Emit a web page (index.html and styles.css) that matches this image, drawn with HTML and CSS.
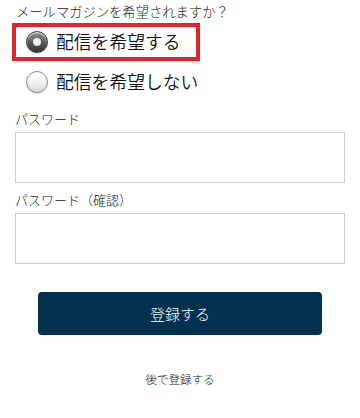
FILE: index.html
```html
<!DOCTYPE html>
<html lang="ja">
<head>
    <meta charset="UTF-8">
    <meta name="viewport" content="width=device-width, initial-scale=1.0">
    <title>メールマガジン登録</title>
    <link rel="stylesheet" href="styles.css">
</head>
<body>
    <form class="register-form">
        <p class="question">メールマガジンを希望されますか？</p>

        <div class="options">
            <label class="option option-marked">
                <input type="radio" name="magazine" value="1" checked>
                <span class="radio"></span>
                <span class="option-text">配信を希望する</span>
            </label>
            <label class="option">
                <input type="radio" name="magazine" value="0">
                <span class="radio"></span>
                <span class="option-text">配信を希望しない</span>
            </label>
        </div>

        <label class="field-label" for="password">パスワード</label>
        <input class="field-input" type="password" id="password">

        <label class="field-label" for="password-confirm">パスワード（確認）</label>
        <input class="field-input" type="password" id="password-confirm">

        <button type="button" class="submit-btn">登録する</button>

        <a class="later-link" href="#">後で登録する</a>
    </form>
</body>
</html>
```

FILE: styles.css
```css
body {
    margin: 0;
    background: #fff;
    color: #333;
    font-family: "Noto Sans CJK JP", "Noto Sans", sans-serif;
}

.register-form {
    display: flex;
    flex-direction: column;
    padding: 2px 15px 0;
}

.question {
    margin: 0 0 5px 1px;
    font-size: 13.3px;
    font-weight: 300;
    line-height: 20px;
    color: #222;
}

.options {
    display: flex;
    flex-direction: column;
    gap: 10px;
}

.option {
    display: flex;
    align-items: center;
    gap: 8px;
    align-self: flex-start;
    height: 30px;
    margin-left: 1px;
    padding: 0 16px 0 10px;
    cursor: pointer;
}

/* red annotation frame around the chosen option */
.option-marked {
    outline: 4px solid #e3222b;
}

.option input {
    display: none;
}

.radio {
    position: relative;
    width: 20px;
    height: 20px;
    border-radius: 50%;
    border: 1px solid #8a8a8a;
    background: linear-gradient(180deg, #ffffff 0%, #f0f0f0 55%, #d4d4d4 100%);
    box-shadow: inset 0 1px 1px rgba(255,255,255,0.9), 0 1px 1px rgba(0,0,0,0.15);
}

.option input:checked + .radio {
    border-color: #3a3a3a;
    background: linear-gradient(180deg, #9a9a9a 0%, #5a5a5a 50%, #333 100%);
}

.option input:checked + .radio::after {
    content: "";
    position: absolute;
    top: 50%;
    left: 50%;
    width: 8px;
    height: 8px;
    margin: -4px 0 0 -4px;
    border-radius: 50%;
    background: radial-gradient(circle at 50% 40%, #fff 0%, #e8e8e8 60%, #bbb 100%);
}

.option-text {
    font-size: 17.8px;
    font-weight: 350;
    color: #111;
    line-height: 1;
}

.field-label {
    margin: 13px 0 4px;
    font-size: 13px;
    font-weight: 300;
    line-height: 18px;
    color: #222;
}

.field-label + .field-input + .field-label {
    margin-top: 8px;
}

.field-input {
    box-sizing: border-box;
    width: 100%;
    height: 51px;
    border: 1px solid #cfcfcf;
    border-radius: 0;
    padding: 0 10px;
    font-size: 16px;
    outline: none;
}

.submit-btn {
    margin: 28px 23px 0;
    height: 43px;
    border: none;
    border-radius: 4px;
    background: #04314f;
    color: #fff;
    font-family: inherit;
    font-size: 15px;
    font-weight: 300;
    cursor: pointer;
}

.later-link {
    align-self: center;
    margin-top: 36px;
    font-size: 11.5px;
    font-weight: 300;
    line-height: 16px;
    color: #111;
    text-decoration: none;
}
```
